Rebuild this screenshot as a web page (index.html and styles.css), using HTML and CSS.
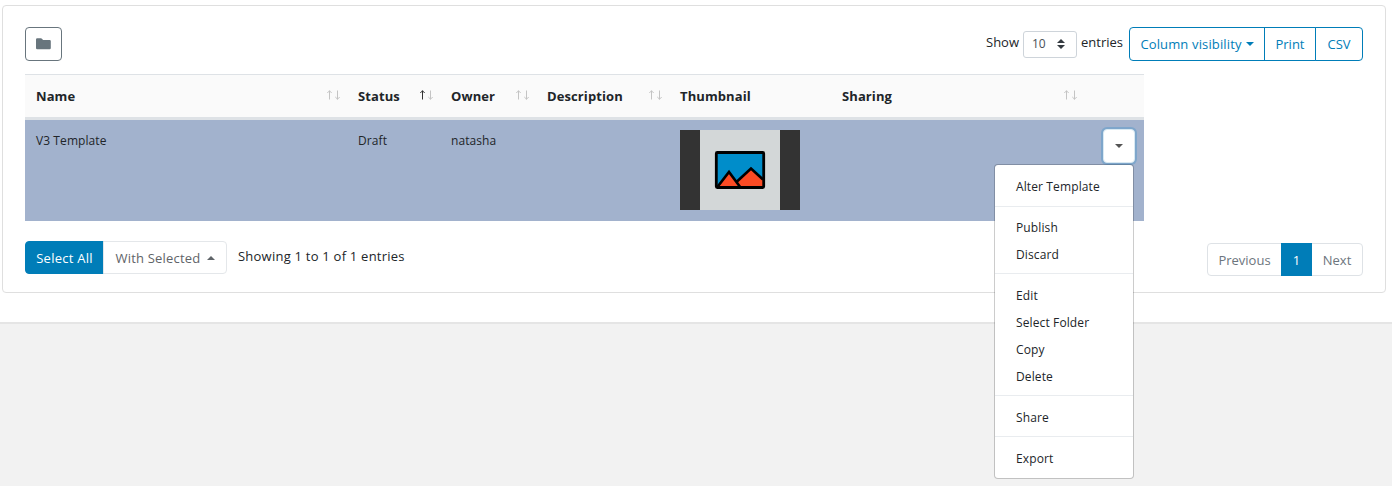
FILE: index.html
```html
<!DOCTYPE html>
<html lang="en">
<head>
<meta charset="utf-8">
<title>Templates</title>
<link rel="stylesheet" href="styles.css">
</head>
<body>
<svg width="0" height="0" class="defs">
  <symbol id="up" viewBox="0 0 6 10"><path d="M2.500 .5V9.500M.3 3L2.500 .8L4.700 3" fill="none" stroke="currentColor"/></symbol>
  <symbol id="down" viewBox="0 0 6 10"><path d="M3.500 .5V9.500M1.300 7L3.500 9.200L5.700 7" fill="none" stroke="currentColor"/></symbol>
</svg>
<main class="page">
  <section class="card">
    <div class="toolbar">
      <button class="btn btn-folder" aria-label="Folders"><svg width="15" height="12" viewBox="0 0 15 12"><path d="M0 1.5Q0 .3 1.2.3H4.8Q5.6.3 6.2 1L7 1.9H13.6Q14.8 1.9 14.8 3.1V10Q14.8 11.2 13.6 11.2H1.2Q0 11.2 0 10Z" fill="#68757d"/></svg></button>
      <div class="tools">
        <label class="length"><span class="show">Show</span><span class="select"><span>10</span><svg width="8" height="10" viewBox="0 0 8 10"><path d="M0 4L4 0L8 4ZM0 6L4 10L8 6Z" fill="#343a40"/></svg></span><span class="entries">entries</span></label>
        <div class="group">
          <button class="btn out visibility"><span>Column visibility</span><i class="caret"></i></button>
          <button class="btn out print">Print</button>
          <button class="btn out csv">CSV</button>
        </div>
      </div>
    </div>
    <table class="table">
      <colgroup><col class="c-name"><col class="c-status"><col class="c-owner"><col class="c-desc"><col class="c-thumb"><col class="c-share"><col class="c-act"></colgroup>
      <thead>
        <tr>
          <th><div class="head"><span>Name</span><span class="sort"><svg><use href="#up"/></svg><svg><use href="#down"/></svg></span></div></th>
          <th><div class="head"><span>Status</span><span class="sort asc"><svg><use href="#up"/></svg><svg><use href="#down"/></svg></span></div></th>
          <th><div class="head"><span>Owner</span><span class="sort"><svg><use href="#up"/></svg><svg><use href="#down"/></svg></span></div></th>
          <th><div class="head"><span>Description</span><span class="sort"><svg><use href="#up"/></svg><svg><use href="#down"/></svg></span></div></th>
          <th><div class="head"><span>Thumbnail</span></div></th>
          <th><div class="head"><span>Sharing</span><span class="sort"><svg><use href="#up"/></svg><svg><use href="#down"/></svg></span></div></th>
          <th></th>
        </tr>
      </thead>
      <tbody>
        <tr>
          <td>V3 Template</td>
          <td>Draft</td>
          <td>natasha</td>
          <td></td>
          <td class="thumb-cell"><svg class="thumb" width="120" height="80" viewBox="0 0 120 80">
            <path d="M0 0H120V80H0Z" fill="#333"/><path d="M20 0H100V80H20Z" fill="#d3d7d8"/>
            <rect x="36.3" y="22.5" width="47.4" height="35" rx="1" fill="#008dca"/>
            <path d="M37 57L49 42L60 57ZM57 52L71 38.5L84 50V57H61Z" fill="#fc4b24"/>
            <path d="M37 57.5L49 42L60.5 57.5M57 51.5L71 38.5L83 49.5" fill="none" stroke="#000" stroke-width="2.600"/>
            <rect x="36.3" y="22.5" width="47.4" height="35" rx="1" fill="none" stroke="#000" stroke-width="2.800"/>
          </svg></td>
          <td></td>
          <td class="actions">
            <div class="dropdown">
              <button class="btn toggle" aria-label="Row menu"><i class="caret"></i></button>
              <div class="menu">
                <a>Alter Template</a>
                <hr>
                <a>Publish</a>
                <a>Discard</a>
                <hr>
                <a>Edit</a>
                <a>Select Folder</a>
                <a>Copy</a>
                <a>Delete</a>
                <hr>
                <a>Share</a>
                <hr>
                <a>Export</a>
              </div>
            </div>
          </td>
        </tr>
      </tbody>
    </table>
    <div class="footer">
      <div class="group">
        <button class="btn select-all">Select All</button>
        <button class="btn with-selected"><span>With Selected</span><i class="caret up"></i></button>
      </div>
      <span class="info">Showing 1 to 1 of 1 entries</span>
      <div class="group pages">
        <button class="btn page-btn prev">Previous</button>
        <button class="btn page-btn current">1</button>
        <button class="btn page-btn next">Next</button>
      </div>
    </div>
  </section>
</main>
</body>
</html>
```
FILE: styles.css
```css
* { box-sizing: border-box; }
body {
  margin: 0;
  height: 486px;
  overflow: hidden;
  background: #f2f2f2;
  color: #212529;
  font: 13px/20px "Segoe UI", "Open Sans", sans-serif;
}
.defs { display: none; }
.page {
  height: 324px;
  padding: 5px 6px 0 2px;
  background: #fff;
  border-bottom: 2px solid #e5e5e5;
}
.card {
  height: 288px;
  padding: 21px 22px 0;
  border: 1px solid #dfdfdf;
  border-radius: 4px;
}
.toolbar { display: flex; justify-content: space-between; height: 47px; }
.tools { display: flex; align-items: flex-start; }
.btn {
  display: flex;
  align-items: center;
  justify-content: center;
  height: 34px;
  padding: 0;
  border: 1px solid;
  border-radius: 4px;
  background: #fff;
  font: inherit;
  white-space: nowrap;
}
.btn-folder { width: 37px; border-color: #68757d; }
.length { display: flex; align-items: center; height: 34px; margin-right: 7px; }
.show { width: 37px; margin-top: -4px; }
.entries { width: 41px; margin-top: -4px; margin-left: 4px; }
.select {
  display: flex;
  align-items: center;
  justify-content: space-between;
  width: 54px;
  height: 27px;
  padding: 0 11px 0 8px;
  border: 1px solid #ced4da;
  border-radius: 3px;
  color: #495057;
  font-size: 12px;
}
.group { display: flex; }
.group .btn { border-radius: 0; }
.group .btn + .btn { margin-left: -1px; }
.group .btn:first-child { border-radius: 4px 0 0 4px; }
.group .btn:last-child { border-radius: 0 4px 4px 0; }
.out { border-color: #007db8; color: #007db8; }
.visibility { width: 136px; gap: 4px; letter-spacing: .14px; }
.print { width: 52px; }
.csv { width: 48px; }
.caret {
  width: 0;
  height: 0;
  border: 4px solid transparent;
  border-top-color: currentColor;
  border-bottom: 0;
}
.caret.up {
  border-width: 0 4.5px 4px;
  border-bottom: 4px solid currentColor;
}
.table {
  width: 1119px;
  table-layout: fixed;
  border-collapse: separate;
  border-spacing: 0;
}
.c-name { width: 322px; }
.c-status { width: 93px; }
.c-owner { width: 96px; }
.c-desc { width: 133px; }
.c-thumb { width: 162px; }
.c-share { width: 253px; }
.c-act { width: 60px; }
th {
  height: 46px;
  padding: 0 7px 0 11px;
  background: #fafafa;
  border-top: 1px solid #dee2e6;
  border-bottom: 3px solid #dee2e6;
  text-align: left;
  font-weight: 700;
  letter-spacing: .1px;
}
.head { display: flex; align-items: center; justify-content: space-between; }
.sort { display: flex; gap: 1px; margin-top: -3px; color: #c4c4c4; }
.sort svg { width: 6px; height: 10px; }
.sort.asc svg:first-child { color: #333; }
td {
  height: 101px;
  padding: 11px 0 10px 11px;
  background: #a2b2cd;
  vertical-align: top;
  font-size: 12px;
  line-height: 20px;
  letter-spacing: .08px;
}
.thumb-cell { padding: 10px 0 11px 11px; }
.thumb { display: block; }
.actions { padding: 9px 9px 0 0; }
.dropdown { position: relative; }
.toggle {
  width: 32px;
  height: 34px;
  margin-left: auto;
  border-color: #d9e9f2;
  box-shadow: 0 0 0 2px #7ea6cb;
  color: #545454;
}
.actions .toggle { margin-right: 0; }
.menu {
  position: absolute;
  top: 35px;
  right: 1px;
  z-index: 1;
  width: 140px;
  height: 315px;
  padding: 8px 0;
  background: #fff;
  border: 1px solid rgba(0, 0, 0, .2);
  background-clip: padding-box;
  border-radius: 4px;
}
.menu a {
  display: block;
  height: 26.8px;
  padding: 1.2px 0 0 21px;
  line-height: 25.6px;
  letter-spacing: .12px;
}
.menu hr { height: 1px; margin: 5.8px 0 7.5px; border: 0; background: #e9ecef; }
.footer { display: flex; align-items: flex-start; padding-top: 20px; }
.footer .btn { height: 33px; }
.select-all { width: 79px; border-color: #007db8; background: #007db8; color: #fff; letter-spacing: .25px; }
.with-selected { width: 124px; gap: 6px; border-color: #e4e7ea; color: #5f6468; letter-spacing: .2px; }
.info { margin: 5px 0 0 11px; letter-spacing: .23px; }
.pages { margin: 2px 0 0 auto; }
.page-btn { border-color: #dee2e6; color: #6c757d; }
.prev { width: 75px; }
.current { z-index: 1; width: 31px; border-color: #007db8; background: #007db8; color: #fff; }
.next { width: 52px; }
```
